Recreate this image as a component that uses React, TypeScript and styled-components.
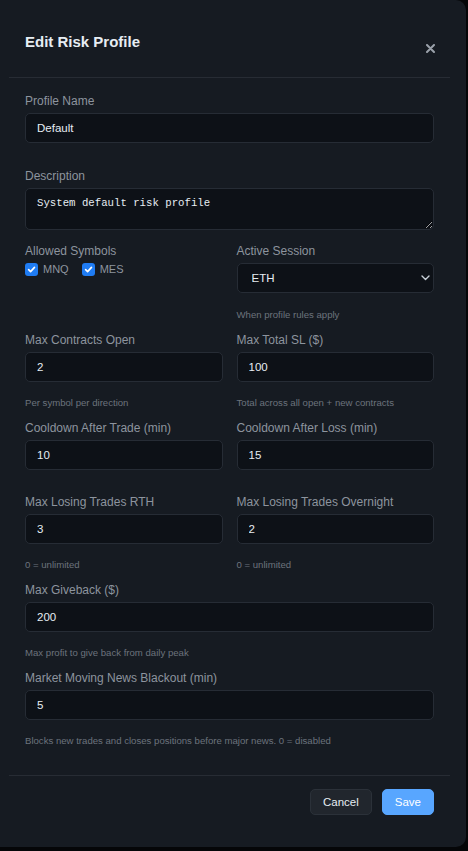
import React from "react";
import styled, { createGlobalStyle } from "styled-components";

const Global = createGlobalStyle`
  html, body { margin: 0; padding: 0; background: #050608; }
  body { font-family: "Liberation Sans", Arial, sans-serif; }
  * { box-sizing: border-box; }
`;

const Panel = styled.div`
  width: 466px;
  background: #161b22;
  border-radius: 0 10px 10px 0;
  padding: 0 16px 0 9px;
  display: flex;
  flex-direction: column;
`;

const Header = styled.div`
  height: 78px;
  padding: 33px 16px 0 16px;
  border-bottom: 1px solid #272c34;
  display: flex;
  justify-content: space-between;
  align-items: flex-start;
`;

const Title = styled.h2`
  margin: 0;
  font-size: 15px;
  line-height: 18px;
  font-weight: 700;
  color: #e6edf3;
`;

const CloseButton = styled.button`
  margin: 10px -1px 0 0;
  width: 10px;
  height: 10px;
  padding: 0;
  border: 0;
  background: transparent;
  display: flex;
  align-items: center;
  justify-content: center;
  cursor: pointer;
  svg { display: block; }
`;

const Body = styled.div`
  padding: 16px 16px 28px;
  display: flex;
  flex-direction: column;
`;

const Row = styled.div<{ $mb?: number }>`
  display: grid;
  grid-template-columns: 1fr 1fr;
  column-gap: 14px;
  margin-bottom: ${(p) => p.$mb ?? 0}px;
`;

const Field = styled.div<{ $mb?: number }>`
  display: flex;
  flex-direction: column;
  min-width: 0;
  margin-bottom: ${(p) => p.$mb ?? 0}px;
`;

const Label = styled.label`
  font-size: 12px;
  line-height: 14px;
  color: #8d949e;
  margin-bottom: 5px;
`;

const Input = styled.input`
  height: 30px;
  width: 100%;
  background: #0d1117;
  border: 1px solid #262c35;
  border-radius: 5px;
  padding: 0 11px;
  font-family: "Liberation Sans", Arial, sans-serif;
  font-size: 11.5px;
  color: #e6edf3;
  outline: none;
`;

const TextArea = styled.textarea`
  height: 42px;
  width: 100%;
  background: #0d1117;
  border: 1px solid #262c35;
  border-radius: 5px;
  padding: 8px 11px;
  font-family: "Liberation Mono", "DejaVu Sans Mono", monospace;
  font-size: 10.7px;
  line-height: 13px;
  color: #e6edf3;
  outline: none;
  resize: vertical;
  display: block;
`;

const Help = styled.div<{ $mt?: number }>`
  margin-top: ${(p) => p.$mt ?? 15}px;
  font-size: 9.6px;
  line-height: 12px;
  color: #6c737d;
`;

const Checks = styled.div`
  display: flex;
  align-items: center;
  gap: 13px;
  height: 13px;
`;

const CheckItem = styled.label`
  display: flex;
  align-items: center;
  gap: 5px;
  font-size: 11px;
  line-height: 13px;
  color: #8d949e;
`;

const Box = styled.span`
  width: 13px;
  height: 13px;
  border-radius: 3px;
  background: #1f7cf3;
  display: flex;
  align-items: center;
  justify-content: center;
`;

const SelectWrap = styled.div`
  position: relative;
  height: 30px;
`;

const Select = styled.select`
  appearance: none;
  -webkit-appearance: none;
  width: 100%;
  height: 30px;
  background: #0d1117;
  border: 1px solid #262c35;
  border-radius: 5px;
  padding: 0 14px;
  font-family: "Liberation Sans", Arial, sans-serif;
  font-size: 11.5px;
  color: #e6edf3;
  outline: none;
`;

const Chevron = styled.svg`
  position: absolute;
  right: 4px;
  top: 12px;
  pointer-events: none;
`;

const Footer = styled.div`
  border-top: 1px solid #272c34;
  padding: 13px 16px 32px;
  display: flex;
  justify-content: flex-end;
  gap: 10px;
`;

const Button = styled.button<{ $primary?: boolean }>`
  height: 26px;
  padding: 0 12px;
  border-radius: 5px;
  font-family: "Liberation Sans", Arial, sans-serif;
  font-size: 11.5px;
  cursor: pointer;
  color: ${(p) => (p.$primary ? "#ffffff" : "#e6edf3")};
  background: ${(p) => (p.$primary ? "#58a6ff" : "#21262d")};
  border: 1px solid ${(p) => (p.$primary ? "#58a6ff" : "#2b3139")};
`;

const Check = () => (
  <Box>
    <svg width="9" height="9" viewBox="0 0 10 10">
      <path d="M1.8 5.2 L4 7.4 L8.3 2.6" fill="none" stroke="#fff" strokeWidth="1.8" strokeLinecap="round" strokeLinejoin="round" />
    </svg>
  </Box>
);

export default function App() {
  return (
    <>
      <Global />
      <Panel>
        <Header>
          <Title>Edit Risk Profile</Title>
          <CloseButton aria-label="Close">
            <svg width="9" height="9" viewBox="0 0 9 9">
              <path d="M1 1 L8 8 M8 1 L1 8" stroke="#9aa1aa" strokeWidth="2" strokeLinecap="round" />
            </svg>
          </CloseButton>
        </Header>
        <Body>
          <Field $mb={26}>
            <Label>Profile Name</Label>
            <Input defaultValue="Default" />
          </Field>
          <Field $mb={14}>
            <Label>Description</Label>
            <TextArea defaultValue="System default risk profile" />
          </Field>
          <Row $mb={12}>
            <Field>
              <Label>Allowed Symbols</Label>
              <Checks>
                <CheckItem>
                  <Check />
                  MNQ
                </CheckItem>
                <CheckItem>
                  <Check />
                  MES
                </CheckItem>
              </Checks>
            </Field>
            <Field>
              <Label>Active Session</Label>
              <SelectWrap>
                <Select defaultValue="ETH">
                  <option value="ETH">ETH</option>
                  <option value="RTH">RTH</option>
                </Select>
                <Chevron width="9" height="6" viewBox="0 0 9 6">
                  <path d="M1 1 L4.5 4.5 L8 1" fill="none" stroke="#c9d1d9" strokeWidth="1.4" strokeLinecap="round" strokeLinejoin="round" />
                </Chevron>
              </SelectWrap>
              <Help $mt={16}>When profile rules apply</Help>
            </Field>
          </Row>
          <Row $mb={12}>
            <Field>
              <Label>Max Contracts Open</Label>
              <Input defaultValue="2" />
              <Help>Per symbol per direction</Help>
            </Field>
            <Field>
              <Label>Max Total SL ($)</Label>
              <Input defaultValue="100" />
              <Help>Total across all open + new contracts</Help>
            </Field>
          </Row>
          <Row $mb={25}>
            <Field>
              <Label>Cooldown After Trade (min)</Label>
              <Input defaultValue="10" />
            </Field>
            <Field>
              <Label>Cooldown After Loss (min)</Label>
              <Input defaultValue="15" />
            </Field>
          </Row>
          <Row $mb={12}>
            <Field>
              <Label>Max Losing Trades RTH</Label>
              <Input defaultValue="3" />
              <Help>0 = unlimited</Help>
            </Field>
            <Field>
              <Label>Max Losing Trades Overnight</Label>
              <Input defaultValue="2" />
              <Help>0 = unlimited</Help>
            </Field>
          </Row>
          <Field $mb={12}>
            <Label>Max Giveback ($)</Label>
            <Input defaultValue="200" />
            <Help>Max profit to give back from daily peak</Help>
          </Field>
          <Field>
            <Label>Market Moving News Blackout (min)</Label>
            <Input defaultValue="5" />
            <Help>Blocks new trades and closes positions before major news. 0 = disabled</Help>
          </Field>
        </Body>
        <Footer>
          <Button>Cancel</Button>
          <Button $primary>Save</Button>
        </Footer>
      </Panel>
    </>
  );
}
